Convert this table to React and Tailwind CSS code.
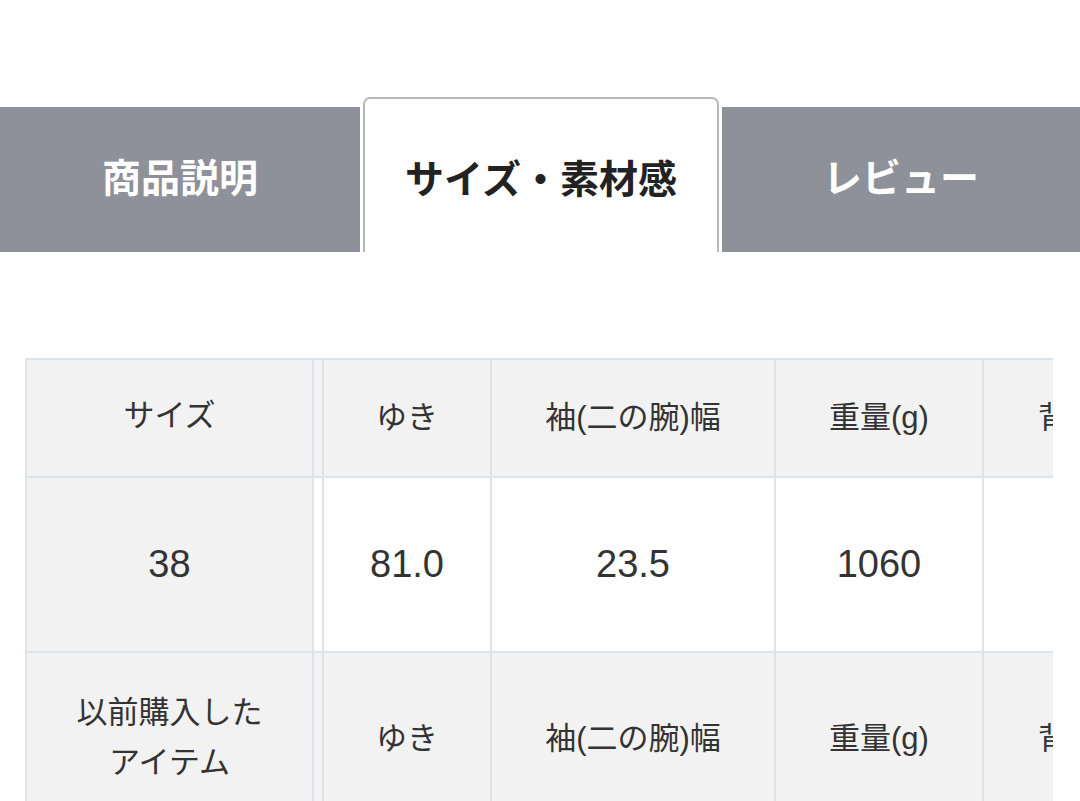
export default function App() {
  const font = { fontFamily: '"Liberation Sans", "Noto Sans CJK JP", sans-serif' };
  const cell = "flex items-center justify-center text-center shrink-0 border-r-2 border-[#dde3ea]";
  const rows = [
    { bg: "bg-[#f2f2f2]", h: "h-[118px]", first: ["サイズ"], vals: ["ゆき", "袖(二の腕)幅", "重量(g)", "背"], head: true },
    { bg: "bg-white", h: "h-[175px]", first: ["38"], vals: ["81.0", "23.5", "1060", ""], head: false },
    { bg: "bg-[#f2f2f2]", h: "h-[175px]", first: ["以前購入した", "アイテム"], vals: ["ゆき", "袖(二の腕)幅", "重量(g)", "背"], head: true },
  ];
  const widths = ["w-[170px]", "w-[284px]", "w-[208px]", "w-[200px]"];
  return (
    <div className="w-[1080px] h-[801px] overflow-hidden bg-white" style={font}>
      <div className="pt-[97px] flex items-end">
        <div className="w-[360px] h-[145px] bg-[#8e9199] text-white flex items-center justify-center text-[39px] font-bold">
          商品説明
        </div>
        <div className="w-[3px]" />
        <div className="w-[356px] h-[155px] pt-[10px] border-2 border-b-0 border-[#b7b7b7] rounded-t-[7px] bg-white flex items-center justify-center text-[39px] font-bold text-[#222]">
          サイズ・素材感
        </div>
        <div className="w-[3px]" />
        <div className="flex-1 h-[145px] bg-[#8e9199] text-white flex items-center justify-center text-[39px] font-bold">
          レビュー
        </div>
      </div>
      <div className="mt-[106px] ml-[25px] w-[1028px] overflow-hidden">
        <div className="border-t-2 border-l-2 border-[#dde3ea] w-[1100px]">
          {rows.map((r, i) => (
            <div key={i} className={`flex border-b-2 border-[#dde3ea] ${r.bg} ${r.h} text-[#333]`}>
              <div className={`${cell} w-[287px] bg-[#f2f2f2] ${r.head ? "text-[31px] leading-[50px] pb-[4px]" : "text-[38px]"}`}>
                <div>
                  {r.first.map((t, j) => (
                    <div key={j}>{t}</div>
                  ))}
                </div>
              </div>
              <div className="w-[8px] shrink-0" />
              {r.vals.map((v, j) => (
                <div
                  key={j}
                  className={`${cell} ${widths[j]} ${j === 0 ? "border-l-2" : ""} ${r.head ? "text-[31px]" : "text-[38px]"} ${j === 3 ? "justify-start pl-[54px]" : ""}`}
                >
                  {v}
                </div>
              ))}
            </div>
          ))}
        </div>
      </div>
    </div>
  );
}
